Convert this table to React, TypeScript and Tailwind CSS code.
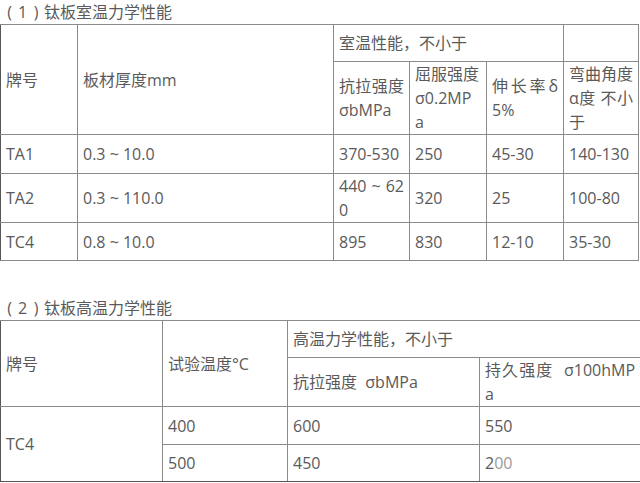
const cell = "border border-[#8a8a8a] px-[5px] align-middle break-all text-justify";

function Title({ n, text }: { n: string; text: string }) {
  return (
    <p className="flex px-[3px] leading-[24px]">
      <span className="w-[13px] text-center">(</span>
      <span className="w-[13px] text-center">{n}</span>
      <span className="w-[14px] text-center">)</span>
      <span className="ml-[1px]">{text}</span>
    </p>
  );
}

export default function App() {
  return (
    <div className="h-[483px] w-[640px] overflow-hidden bg-white font-['Open_Sans','Noto_Sans_CJK_SC',sans-serif] text-[16px] leading-[24px] text-[#5a5a5a]">
      <Title n="1" text="钛板室温力学性能" />
      <table className="w-[638px] table-fixed border-collapse">
        <colgroup>
          <col className="w-[77px]" />
          <col className="w-[256px]" />
          <col className="w-[76px]" />
          <col className="w-[77px]" />
          <col className="w-[77px]" />
          <col className="w-[75px]" />
        </colgroup>
        <tbody>
          <tr className="h-[37px]">
            <td rowSpan={2} className={`${cell} border-l-[#555]`}>牌号</td>
            <td rowSpan={2} className={cell}>板材厚度mm</td>
            <td colSpan={3} className={cell}>室温性能，不小于</td>
            <td className={cell}></td>
          </tr>
          <tr className="h-[72px]">
            <td className={cell}>抗拉强度σbMPa</td>
            <td className={cell}>
              屈服强度
              <br />
              σ0.2MP
              <br />a
            </td>
            <td className={cell}>伸长率δ5%</td>
            <td className={cell}>弯曲角度α度 不小于</td>
          </tr>
          <tr className="h-[39px]">
            <td className={`${cell} border-l-[#555]`}>TA1</td>
            <td className={cell}>0.3 ~ 10.0</td>
            <td className={cell}>370-530</td>
            <td className={cell}>250</td>
            <td className={cell}>45-30</td>
            <td className={cell}>140-130</td>
          </tr>
          <tr className="h-[47px]">
            <td className={`${cell} border-l-[#555]`}>TA2</td>
            <td className={cell}>0.3 ~ 110.0</td>
            <td className={cell}>440 ~ 620</td>
            <td className={cell}>320</td>
            <td className={cell}>25</td>
            <td className={cell}>100-80</td>
          </tr>
          <tr className="h-[38px]">
            <td className={`${cell} border-l-[#555]`}>TC4</td>
            <td className={cell}>0.8 ~ 10.0</td>
            <td className={cell}>895</td>
            <td className={cell}>830</td>
            <td className={cell}>12-10</td>
            <td className={cell}>35-30</td>
          </tr>
        </tbody>
      </table>

      <div className="mt-[35px]">
        <Title n="2" text="钛板高温力学性能" />
      </div>
      <table className="w-[640px] table-fixed border-collapse">
        <colgroup>
          <col className="w-[162px]" />
          <col className="w-[125px]" />
          <col className="w-[192px]" />
          <col className="w-[161px]" />
        </colgroup>
        <tbody>
          <tr className="h-[37px]">
            <td rowSpan={2} className={`${cell} border-l-[#555]`}>牌号</td>
            <td rowSpan={2} className={cell}>试验温度°C</td>
            <td colSpan={2} className={cell}>高温力学性能，不小于</td>
          </tr>
          <tr className="h-[49px]">
            <td className={cell}>抗拉强度&nbsp;&nbsp;σbMPa</td>
            <td className={cell}>持久强度&nbsp;&nbsp;σ100hMPa</td>
          </tr>
          <tr className="h-[38px]">
            <td rowSpan={2} className={`${cell} border-l-[#555] border-b-[#555]`}>TC4</td>
            <td className={cell}>400</td>
            <td className={cell}>600</td>
            <td className={cell}>550</td>
          </tr>
          <tr className="h-[37px]">
            <td className={`${cell} border-b-[#555]`}>500</td>
            <td className={`${cell} border-b-[#555]`}>450</td>
            <td className={`${cell} border-b-[#555] border-l-dotted`}>
              2<span className="text-[#999]">00</span>
            </td>
          </tr>
        </tbody>
      </table>
    </div>
  );
}
